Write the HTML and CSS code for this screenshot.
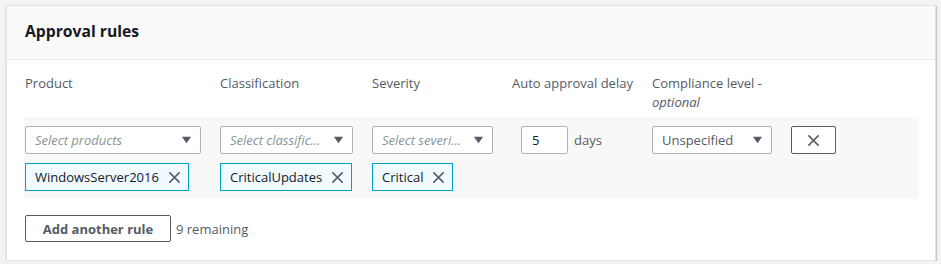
FILE: index.html
```html
<!DOCTYPE html>
<html>
<head>
<meta charset="utf-8">
<link rel="stylesheet" href="styles.css">
</head>
<body>
<div class="card">
  <div class="card-header"><h2>Approval rules</h2></div>
  <div class="card-body">
    <div class="labels">
      <div class="lbl">Product</div>
      <div class="lbl">Classification</div>
      <div class="lbl">Severity</div>
      <div class="lbl">Auto approval delay</div>
      <div class="lbl">Compliance level -<br><i>optional</i></div>
      <div></div>
    </div>
    <div class="rule">
      <div class="cell">
        <div class="select placeholder"><span>Select products</span><svg class="caret" viewBox="0 0 12 8"><path d="M1 0.5h10L6 7.5z"/></svg></div>
        <div class="token">WindowsServer2016<svg class="x" viewBox="0 0 14 14"><path d="M1.5 1.5l11 11M12.5 1.5l-11 11"/></svg></div>
      </div>
      <div class="cell">
        <div class="select placeholder"><span>Select classific...</span><svg class="caret" viewBox="0 0 12 8"><path d="M1 0.5h10L6 7.5z"/></svg></div>
        <div class="token">CriticalUpdates<svg class="x" viewBox="0 0 14 14"><path d="M1.5 1.5l11 11M12.5 1.5l-11 11"/></svg></div>
      </div>
      <div class="cell">
        <div class="select placeholder"><span>Select severi...</span><svg class="caret" viewBox="0 0 12 8"><path d="M1 0.5h10L6 7.5z"/></svg></div>
        <div class="token">Critical<svg class="x" viewBox="0 0 14 14"><path d="M1.5 1.5l11 11M12.5 1.5l-11 11"/></svg></div>
      </div>
      <div class="cell delay">
        <div class="input">5</div><span class="unit">days</span>
      </div>
      <div class="cell">
        <div class="select value"><span>Unspecified</span><svg class="caret" viewBox="0 0 12 8"><path d="M1 0.5h10L6 7.5z"/></svg></div>
      </div>
      <div class="cell">
        <button class="remove"><svg class="x" viewBox="0 0 14 14"><path d="M1.5 1.5l11 11M12.5 1.5l-11 11"/></svg></button>
      </div>
    </div>
    <div class="footer">
      <button class="add">Add another rule</button>
      <span class="remaining">9 remaining</span>
    </div>
  </div>
</div>
</body>
</html>
```

FILE: styles.css
```css
* { box-sizing: border-box; }
html, body { margin: 0; padding: 0; }
body {
  background: #f2f3f3;
  font-family: "Open Sans", "Noto Sans", sans-serif;
  font-size: 13px;
  color: #16191f;
  padding: 5px 5px 0 6px;
}
.card {
  background: #fff;
  border: 1px solid #e2e4e4;
  box-shadow: 0 1px 1px rgba(0,28,36,0.3), 1px 1px 1px rgba(0,28,36,0.15);
  height: 256px;
}
.card-header {
  background: #fafafa;
  border-bottom: 1px solid #eaeded;
  height: 54px;
  padding: 14px 18px 0;
}
.card-header h2 {
  margin: 0;
  font-size: 15.7px;
  font-weight: 700;
  line-height: 22px;
  color: #16191f;
}
.card-body { padding: 11px 17px 0 18px; }
.labels, .rule {
  display: grid;
  grid-template-columns: 176px 133px 121px 121px 120px 45px;
  column-gap: 19px;
}
.lbl {
  line-height: 19px;
  color: #545b64;
  padding-top: 3px;
}
.lbl i { font-style: italic; }
.labels { height: 46px; }
.rule {
  background: #f8f8f8;
  padding: 9px 0 8px 1px;
  margin-left: -1px;
  width: 895px;
}
.cell { display: flex; flex-direction: column; gap: 9px; align-items: flex-start; }
.select {
  width: 100%;
  height: 28px;
  border: 1px solid #aab7b8;
  border-radius: 2px;
  background: #fff;
  display: flex;
  align-items: center;
  justify-content: space-between;
  padding: 0 8px 0 9px;
}
.select span { white-space: nowrap; overflow: hidden; }
.placeholder span { font-style: italic; color: #879596; }
.value span { color: #545b64; }
.caret { width: 11px; height: 8px; fill: #545b64; flex: none; }
.token {
  height: 28px;
  border: 1px solid #00a1c9;
  background: #f1faff;
  display: inline-flex;
  align-items: center;
  gap: 9px;
  padding: 0 7px 0 9px;
  color: #16191f;
  white-space: nowrap;
}
.x { width: 13px; height: 13px; stroke: #545b64; stroke-width: 1.6; fill: none; flex: none; }
.delay { flex-direction: row; align-items: center; gap: 6px; padding-left: 9px; height: 28px; }
.input {
  width: 47px;
  height: 28px;
  border: 1px solid #aab7b8;
  border-radius: 2px;
  background: #fff;
  padding-left: 10px;
  line-height: 26px;
  color: #16191f;
}
.unit { color: #545b64; }
.remove {
  width: 45px;
  height: 28px;
  border: 1px solid #545b64;
  border-radius: 2px;
  background: #fff;
  display: flex;
  align-items: center;
  justify-content: center;
  padding: 0;
}
.footer {
  display: flex;
  align-items: center;
  gap: 5px;
  margin-top: 16px;
}
.add {
  width: 146px;
  height: 27px;
  border: 1px solid #545b64;
  border-radius: 2px;
  background: #fff;
  font-family: inherit;
  font-size: 13px;
  font-weight: 700;
  color: #545b64;
  padding: 0;
}
.remaining { color: #545b64; }
```
